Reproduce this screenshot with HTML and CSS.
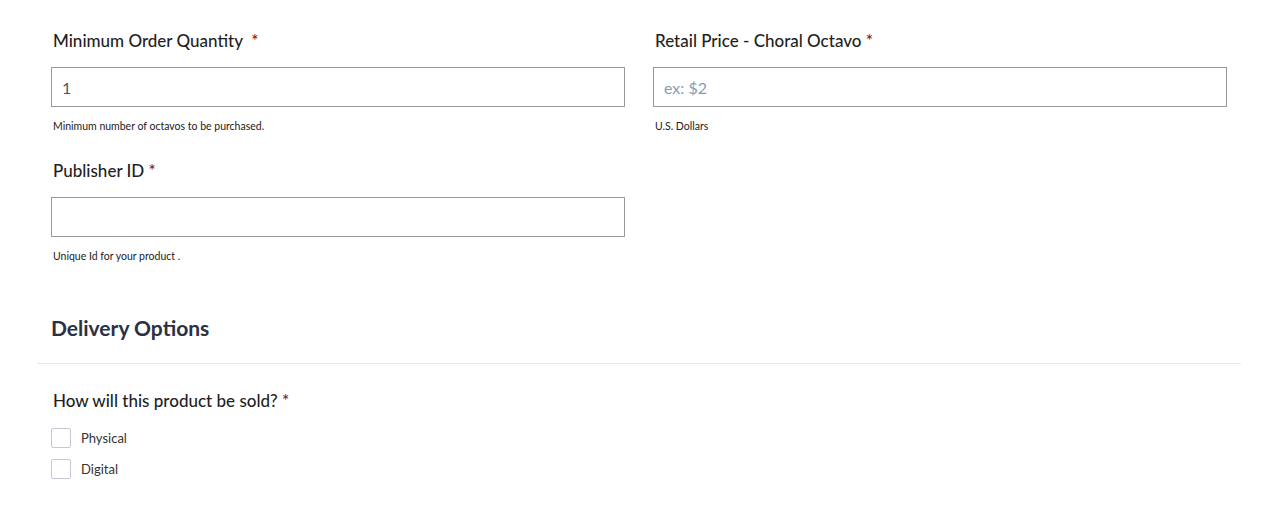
FILE: index.html
```html
<!DOCTYPE html>
<html>
<head>
<meta charset="utf-8">
<link rel="stylesheet" href="styles.css">
</head>
<body>
<div class="page">
  <div class="grid">
    <div class="field">
      <label class="label">Minimum Order Quantity&nbsp; <span class="req">*</span></label>
      <input class="input" type="text" value="1">
      <div class="help">Minimum number of octavos to be purchased.</div>
    </div>
    <div class="field">
      <label class="label">Retail Price - Choral Octavo <span class="req">*</span></label>
      <input class="input" type="text" placeholder="ex: $2">
      <div class="help">U.S. Dollars</div>
    </div>
    <div class="field">
      <label class="label">Publisher ID <span class="req">*</span></label>
      <input class="input" type="text">
      <div class="help">Unique Id for your product .</div>
    </div>
  </div>
  <div class="section">
    <h2 class="section-title">Delivery Options</h2>
  </div>
  <div class="group">
    <div class="label">How will this product be sold? <span class="req">*</span></div>
    <div class="checks">
      <label class="check"><span class="box"></span><span>Physical</span></label>
      <label class="check"><span class="box"></span><span>Digital</span></label>
    </div>
  </div>
</div>
</body>
</html>
```
FILE: styles.css
```css
* { box-sizing: border-box; }
body {
  margin: 0;
  background: #fff;
  font-family: Lato, "Noto Sans", sans-serif;
  color: #222;
}
.page {
  padding: 29px 35px 0 37px;
}
.grid {
  display: grid;
  grid-template-columns: 1fr 1fr;
  column-gap: 28px;
  padding: 0 14px;
}
.field {
  display: flex;
  flex-direction: column;
  padding-bottom: 25px;
}
.label {
  display: block;
  font-size: 17px;
  line-height: 24px;
  font-weight: 500;
  color: #1f1f1f;
  padding-left: 2px;
}
.req { color: #8b1a1a; }
.input {
  margin-top: 14px;
  height: 40px;
  width: 100%;
  border: 1px solid #999;
  border-radius: 0;
  padding: 0 10px;
  font-family: Lato, "Noto Sans", sans-serif;
  font-size: 16px;
  color: #555;
  outline: none;
}
.input::placeholder { color: #8a9ab5; }
.help {
  margin-top: 11px;
  font-size: 10.5px;
  line-height: 16px;
  color: #222;
  padding-left: 2px;
}
.section {
  margin-top: 24px;
  border-bottom: 1px solid #e8e8e8;
  padding: 0 14px 20px;
}
.section-title {
  margin: 0;
  font-size: 21px;
  line-height: 30px;
  font-weight: 700;
  color: #2a3145;
}
.group {
  padding: 25px 14px 0;
}
.checks {
  margin-top: 15px;
  display: flex;
  flex-direction: column;
  gap: 11px;
}
.check {
  display: flex;
  align-items: center;
  gap: 10px;
  font-size: 13px;
  line-height: 20px;
  color: #333;
  height: 20px;
}
.box {
  width: 20px;
  height: 20px;
  border: 1px solid #c3c8d4;
  border-radius: 2px;
  background: #fff;
}
```
